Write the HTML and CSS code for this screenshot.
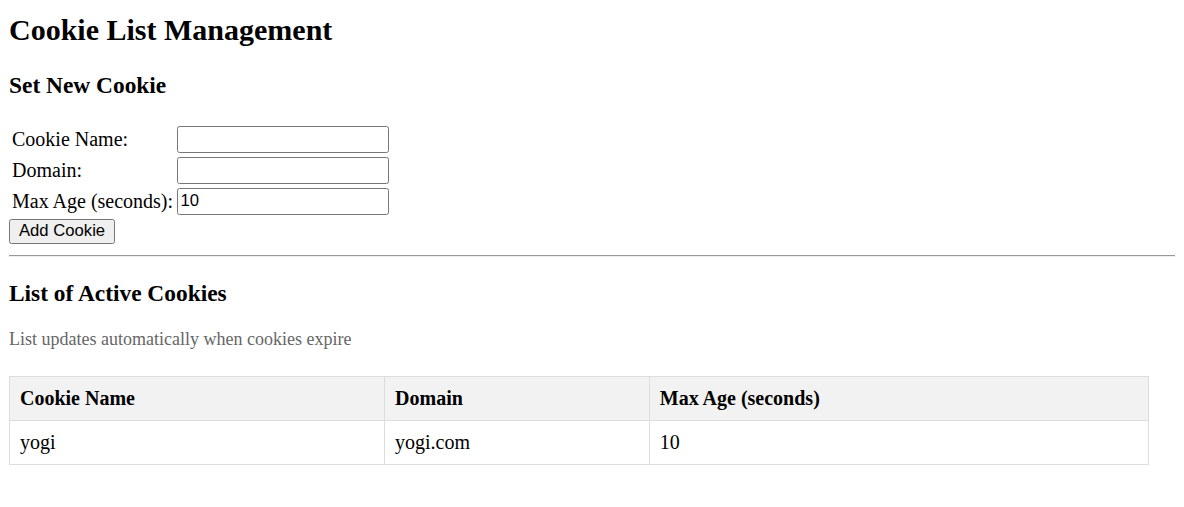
FILE: index.html
```html
<!DOCTYPE html>
<html>
<head>
<meta charset="utf-8">
<title>Cookie List Management</title>
<link rel="stylesheet" href="styles.css">
</head>
<body>
<h1 class="title">Cookie List Management</h1>
<h3 class="section-title">Set New Cookie</h3>
<form class="cookie-form">
  <table class="form-table">
    <tr><td class="label">Cookie Name:</td><td><input class="field" type="text"></td></tr>
    <tr><td class="label">Domain:</td><td><input class="field" type="text"></td></tr>
    <tr><td class="label">Max Age (seconds):</td><td><input class="field" type="text" value="10"></td></tr>
  </table>
  <button class="add-btn" type="button">Add Cookie</button>
</form>
<div class="divider"></div>
<h3 class="section-title">List of Active Cookies</h3>
<p class="hint">List updates automatically when cookies expire</p>
<table class="cookie-table">
  <thead>
    <tr><th>Cookie Name</th><th>Domain</th><th>Max Age (seconds)</th></tr>
  </thead>
  <tbody>
    <tr><td>yogi</td><td>yogi.com</td><td>10</td></tr>
  </tbody>
</table>
</body>
</html>
```

FILE: styles.css
```css
html { overflow-x: hidden; }
body {
  margin: 0 9px 8px;
  padding-top: 13px;
  font-family: "Liberation Serif", "Times New Roman", serif;
  font-size: 20px;
  color: #000;
  background: #fff;
}
.title {
  font-size: 30px;
  margin: 0 0 24.5px;
}
.section-title {
  font-size: 23.4px;
  margin: 23.4px 0 22px;
}
.cookie-form { margin: 0; }
.form-table {
  border-spacing: 2px;
  margin-top: 24px;
}
.form-table td { padding: 1px; }
.label { font-size: 20px; }
.field {
  display: block;
  font-family: "Liberation Sans", Arial, sans-serif;
  font-size: 16.67px;
  width: 212px;
  height: 27px;
  box-sizing: border-box;
  border: 1px solid #767676;
  border-radius: 2.5px;
  padding: 1px 2.5px;
  color: #000;
  background: #fff;
}
.add-btn {
  display: block;
  margin-top: 1px;
  font-family: "Liberation Sans", Arial, sans-serif;
  font-size: 16.67px;
  height: 25px;
  padding: 0 9px;
  border: 1px solid #767676;
  border-radius: 2.5px;
  background: #efefef;
  color: #000;
}
.divider {
  height: 0;
  border-top: 1px solid #9a9a9a;
  border-bottom: 1px solid #eeeeee;
  margin: 11px -9px 0 0;
}
.hint {
  font-size: 18px;
  color: #666;
  margin: 22px 0 26px;
}
.cookie-table {
  border-collapse: collapse;
  width: 1140px;
  font-size: 20px;
}
.cookie-table th,
.cookie-table td {
  border: 1px solid #ddd;
  padding: 10px;
  text-align: left;
}
.cookie-table th { background: #f2f2f2; }
```
